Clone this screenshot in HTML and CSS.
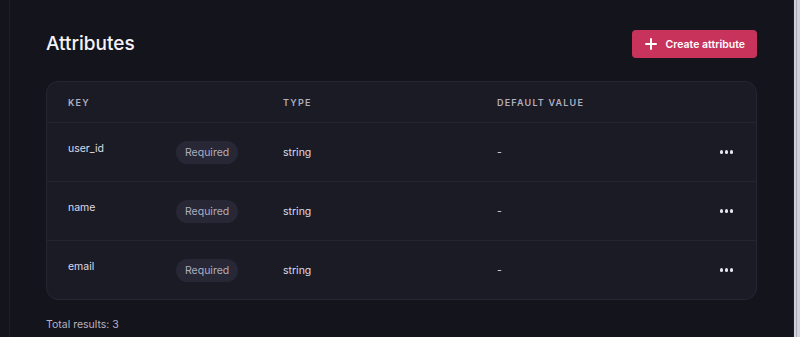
FILE: index.html
```html
<!DOCTYPE html>
<html>
<head>
  <title>Attributes</title>
  <meta name="viewport" content="width=device-width, initial-scale=1.0">
  <link rel="stylesheet" href="styles.css">
</head>
<body>
  <div class="page">
    <div class="rail"></div>
    <main class="content">
      <div class="heading">
        <h1>Attributes</h1>
        <button class="btn-create">
          <svg width="12" height="12" viewBox="0 0 12 12" fill="none" stroke="#fff" stroke-width="2" stroke-linecap="round">
            <path d="M6 1v10M1 6h10"/>
          </svg>
          <span>Create attribute</span>
        </button>
      </div>

      <div class="table">
        <div class="row head">
          <div>Key</div>
          <div>Type</div>
          <div>Default value</div>
          <div></div>
        </div>
        <div class="row">
          <div class="key"><span class="key-name">user_id</span><span class="badge">Required</span></div>
          <div>string</div>
          <div>-</div>
          <div class="actions"><span class="dots"><i></i><i></i><i></i></span></div>
        </div>
        <div class="row">
          <div class="key"><span class="key-name">name</span><span class="badge">Required</span></div>
          <div>string</div>
          <div>-</div>
          <div class="actions"><span class="dots"><i></i><i></i><i></i></span></div>
        </div>
        <div class="row">
          <div class="key"><span class="key-name">email</span><span class="badge">Required</span></div>
          <div>string</div>
          <div>-</div>
          <div class="actions"><span class="dots"><i></i><i></i><i></i></span></div>
        </div>
      </div>

      <p class="total">Total results: 3</p>
    </main>
    <div class="scrollbar"><div class="thumb"></div></div>
  </div>
</body>
</html>
```

FILE: styles.css
```css
* {
  margin: 0;
  padding: 0;
  box-sizing: border-box;
}

body {
  font-family: Inter, "Noto Sans", sans-serif;
  background: #14141d;
  color: #e4e3ee;
  height: 337px;
  overflow: hidden;
}

.page {
  display: flex;
  height: 337px;
}

.rail {
  width: 10px;
  border-right: 1px solid #1f1f2a;
  flex-shrink: 0;
}

.content {
  flex: 1;
  padding: 30px 36px 0 36px;
}

.heading {
  display: flex;
  align-items: center;
  justify-content: space-between;
  height: 28px;
  margin-bottom: 23px;
}

.heading h1 {
  font-size: 19px;
  font-weight: 500;
  color: #f4f3fa;
  margin-top: -2px;
}

.btn-create {
  display: flex;
  align-items: center;
  gap: 9px;
  height: 28px;
  padding: 0 12px 0 13px;
  background: #c8335c;
  border: none;
  border-radius: 4px;
  color: #fff;
  font-family: Inter, sans-serif;
  font-size: 10.5px;
  font-weight: 600;
}

.table {
  background: #1b1b26;
  border: 1px solid #262633;
  border-radius: 12px;
}

.row {
  display: grid;
  grid-template-columns: 215px 214px 1fr 40px;
  align-items: center;
  height: 59px;
  padding: 0 21px;
  border-top: 1px solid #252531;
  font-size: 10.5px;
  color: #dcdbe6;
}

.row.head {
  height: 40px;
  border-top: none;
  font-size: 9px;
  font-weight: 600;
  letter-spacing: 1.2px;
  text-transform: uppercase;
  color: #b0afbf;
}

.key {
  display: flex;
  align-items: center;
}

.key-name {
  width: 108px;
  margin-bottom: 8px;
}

.badge {
  display: inline-flex;
  align-items: center;
  height: 23px;
  padding: 0 9px;
  border-radius: 12px;
  background: #272735;
  color: #afaebf;
}

.actions {
  display: flex;
  justify-content: flex-end;
  padding-right: 2px;
}

.dots {
  display: flex;
  gap: 1.5px;
}

.dots i {
  width: 3.5px;
  height: 3.5px;
  border-radius: 50%;
  background: #e6e5ef;
}

.total {
  margin-top: 18px;
  font-size: 10.5px;
  color: #b4b3c3;
}

.scrollbar {
  width: 7px;
  flex-shrink: 0;
  background: #d2d1de;
  border-left: 1px solid #1c1c26;
  padding-left: 2px;
}

.thumb {
  height: 100%;
  border-left: 1px solid #a9a8b6;
}
```
